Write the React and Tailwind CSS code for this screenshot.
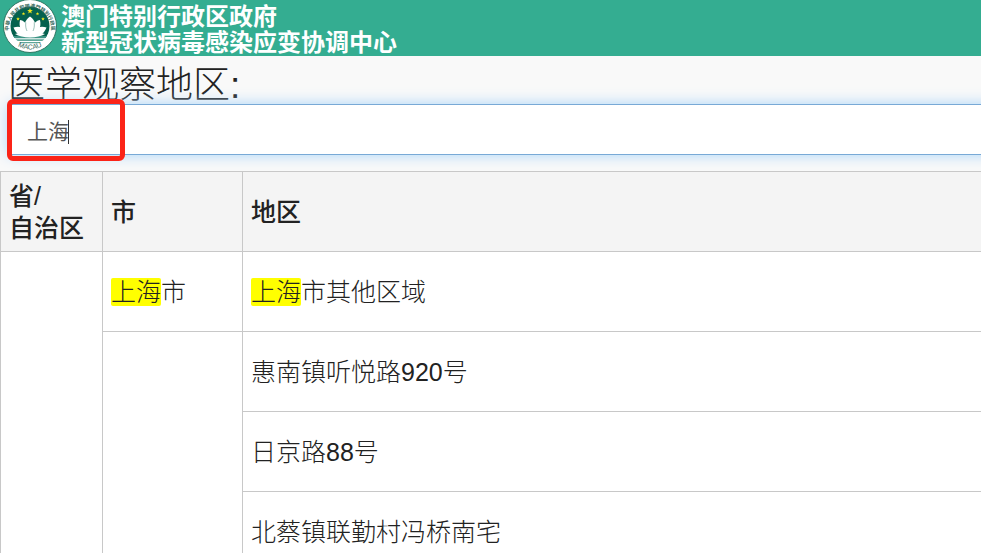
import React from 'react';

const KEYWORD = '上海';

const areas = ['上海市其他区域', '惠南镇听悦路920号', '日京路88号', '北蔡镇联勤村冯桥南宅'];

const Star = ({ x, y, size }) => (
  <path
    transform={`translate(${x} ${y}) scale(${size})`}
    d="M0-1 .25-.33 .95-.31 .4.12 .59.81 0 .42-.59.81-.4.12-.95-.31-.25-.33Z"
    fill="#f4e71c"
  />
);

const Emblem = () => (
  <svg className="h-14 w-14 shrink-0" viewBox="0 0 56 56" role="img" aria-label="MACAU">
    <defs>
      <path id="ring-top" d="M9.6 37.5A21.2 21.2 0 1 1 48.4 37.5" />
      <path id="ring-bottom" d="M11 41.5A24.5 24.5 0 0 0 47 41.5" />
      <clipPath id="disc">
        <circle cx="29" cy="26" r="19.5" />
      </clipPath>
    </defs>
    <circle cx="29" cy="26" r="26.5" fill="#fff" stroke="#1b5f4d" strokeWidth="0.8" />
    <g clipPath="url(#disc)">
      <rect x="9" y="5" width="40" height="33" fill="#04614e" />
      <path d="M9 36h40v2.2H9Z" fill="#3d9485" />
      <path d="M9 39.3h40v1.6H9Z" fill="#5fa698" />
      <path d="M9 42h40v1.3H9Z" fill="#5fa698" />
    </g>
    <Star x={29} y={11} size={3} />
    <Star x={22.5} y={13.8} size={1.9} />
    <Star x={36.5} y={13.8} size={1.9} />
    <Star x={17} y={19} size={1.9} />
    <Star x={42} y={19} size={1.9} />
    <g fill="#fff">
      <path d="M29 16.5C34.5 20 36 26.5 33 34.5H25C22 26.5 23.5 20 29 16.5Z" />
      <path d="M19 20C25.5 21 27 27 28.5 35 20 34 17.5 27 19 20Z" />
      <path d="M39 20C32.5 21 31 27 29.5 35 38 34 40.5 27 39 20Z" />
      <path d="M12.5 27.5C20 25 26 29 28.5 35.5 20 37.5 15.5 34.5 12.5 27.5Z" />
      <path d="M45.5 27.5C38 25 32 29 29.5 35.5 38 37.5 42.5 34.5 45.5 27.5Z" />
      <path d="M14 34C22 31.5 36 31.5 44 34 37 38.5 21 38.5 14 34Z" />
    </g>
    <path
      d="M24.8 22.5C24.3 26 25 29 26 31M33.2 22.5C33.7 26 33 29 32 31"
      fill="none"
      stroke="#04614e"
      strokeWidth="0.4"
    />
    <text className="font-['Noto_Sans_CJK_TC',sans-serif] text-[5px] font-bold" fill="#33685b">
      <textPath href="#ring-top" startOffset="50%" textAnchor="middle">
        中華人民共和國澳門特別行政區
      </textPath>
    </text>
    <text className="font-['Liberation_Sans',sans-serif] text-[7px]" fill="#33685b">
      <textPath href="#ring-bottom" startOffset="50%" textAnchor="middle">
        MACAU
      </textPath>
    </text>
  </svg>
);

const Highlight = ({ text }) => {
  if (!text.startsWith(KEYWORD)) return text;
  return (
    <>
      <mark className="rounded-xs bg-[#ffff00] text-inherit">{KEYWORD}</mark>
      {text.slice(KEYWORD.length)}
    </>
  );
};

const AreaCell = ({ text }) => (
  <td className="h-20 border-y border-l border-[#c8c8c8] px-2">
    <Highlight text={text} />
  </td>
);

const App = () => {
  return (
    <div className="h-screen overflow-hidden bg-[#f9f9f9] font-['Liberation_Sans','Noto_Sans_CJK_SC',sans-serif] text-[#222]">
      <header className="flex h-14 items-center gap-1 bg-[#34ad91] pl-px text-white">
        <Emblem />
        <h1 className="pt-1 text-[24px] leading-[26px] font-bold">
          澳门特别行政区政府
          <br />
          新型冠状病毒感染应变协调中心
        </h1>
      </header>

      <main>
        <label htmlFor="area" className="block h-12 px-2 text-[37px] leading-[60px] font-light">
          医学观察地区:
        </label>

        {/* Search box */}
        <div className="relative -mr-4 mb-4 pl-2">
          <input
            id="area"
            type="text"
            defaultValue={KEYWORD}
            className="block h-[51px] w-full border border-[#78a9d6] bg-white px-4.5 text-[21px] text-[#555] shadow-[0_0_14px_#a9d4f8] outline-none"
          />
          <span className="absolute top-4 left-[68px] h-6 w-px bg-[#333]" />
          <span className="absolute -top-[5px] left-[7px] h-[62px] w-[118px] rounded-md border-5 border-[#fb2418]" />
        </div>

        {/* Results */}
        <table className="relative w-full table-fixed border-collapse bg-white text-left text-[25px]">
          <colgroup>
            <col className="w-[102px]" />
            <col className="w-[140px]" />
            <col />
          </colgroup>
          <thead className="bg-[#f4f4f4] leading-8">
            <tr className="h-20">
              <th scope="col" className="border border-[#c8c8c8] px-2 font-medium">
                省/
                <br />
                自治区
              </th>
              <th scope="col" className="border border-[#c8c8c8] px-2 font-medium">市</th>
              <th scope="col" className="border-y border-l border-[#c8c8c8] px-2 font-medium">地区</th>
            </tr>
          </thead>
          <tbody className="leading-7 font-light">
            <tr>
              <td rowSpan={4} className="border border-[#c8c8c8]" />
              <td className="h-20 border border-[#c8c8c8] px-2">
                <Highlight text="上海市" />
              </td>
              <AreaCell text={areas[0]} />
            </tr>
            <tr>
              <td rowSpan={3} className="border border-[#c8c8c8]" />
              <AreaCell text={areas[1]} />
            </tr>
            {areas.slice(2).map((area) => (
              <tr key={area}>
                <AreaCell text={area} />
              </tr>
            ))}
          </tbody>
        </table>
      </main>
    </div>
  );
};

export default App;
